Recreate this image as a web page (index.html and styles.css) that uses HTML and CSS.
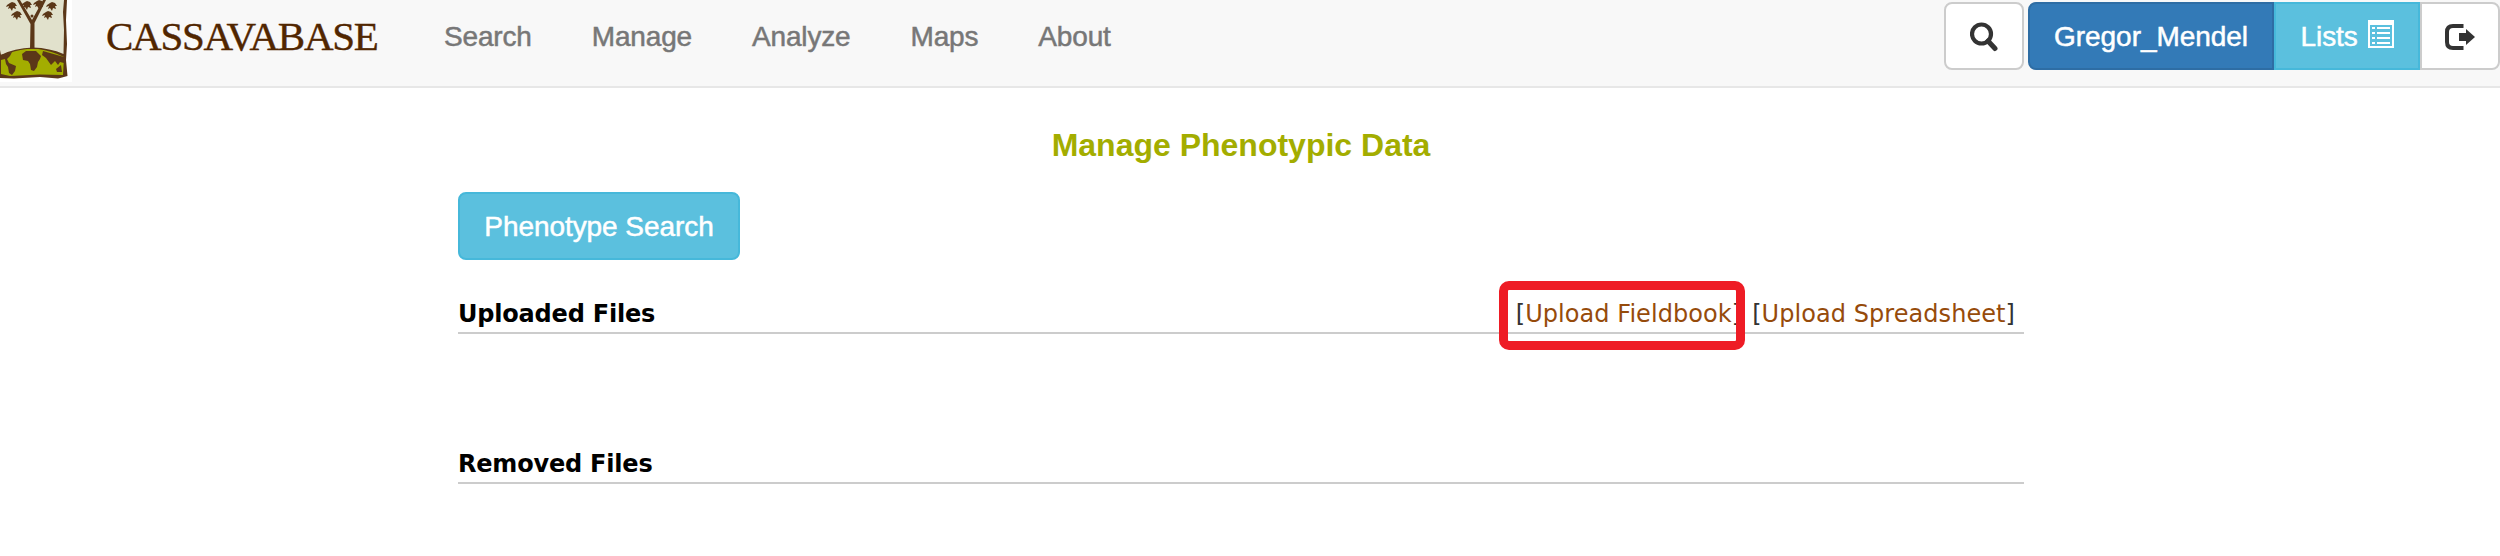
FILE: index.html
```html
<!DOCTYPE html>
<html lang="en">
<head>
<meta charset="utf-8">
<title>Cassavabase</title>
<link rel="stylesheet" href="styles.css">
</head>
<body>
<header class="navbar">
  <svg class="logo" viewBox="0 0 72 82">
    <rect width="72" height="82" fill="#fff"/>
    <path fill="#5b3718" d="M0 0H67L66 20L67 44L66 60L67.500 76L62 77.500L58 78.500L40 77L14 78.500L0 78Z"/>
    <path fill="#e1e1cc" d="M0 0H64L63 12L64 30L63.500 54Q50 48 33 47.500Q14 48 1 55L0 50Z"/>
    <path fill="#a3ad00" d="M1 57Q14 50 27 49L38 49Q52 51 64 57L63 75L40 74.500L10 76L1 74Z"/>
    <path fill="#5b3718" d="M30 49L30.500 24L17 0H20L32 20L43 0H46L34.500 23L34.500 49Z"/>
    <g fill="#5b3718">
      <path d="M22 54L26 51H36L41 56L40 59L38 62L37 67L34 71L31 70L30 64L28 61L23 60Z"/>
      <path d="M0 55L12 52L10 56L7 59L9 63L16 66L15 71L12 75L9 73L8 67L6 64L5 59L1 60Z"/>
      <path d="M43 51L64 57V63L60 62L58 65L55 61L51 65L46 58L42 55Z"/>
      <path d="M56 69L61 65L62 72L57 72Z"/>
      <path id="leaf" d="M12 14L15 12L17 11L20 12L22 15L20 15L21 18L18 17L17 20L15 17L13 18L14 15L11 16Z"/>
      <use href="#leaf" x="31"/><use href="#leaf" x="-5" y="-9"/><use href="#leaf" x="10" y="-10"/><use href="#leaf" x="22" y="-11"/><use href="#leaf" x="35" y="-9"/>
      <circle cx="32" cy="16" r="1.500"/>
    </g>
  </svg>
  <span class="brand">CASSAVABASE</span>
  <nav class="menu"><a>Search</a><a>Manage</a><a>Analyze</a><a>Maps</a><a>About</a></nav>
  <div class="actions">
    <button class="btn search"><svg width="28" height="32" viewBox="0 0 28 32"><circle cx="11.500" cy="13" r="9.500" fill="none" stroke="#333" stroke-width="4.200"/><path d="M18 20L25 27.500" stroke="#333" stroke-width="5" stroke-linecap="round"/></svg></button>
    <div class="group">
      <button class="btn user">Gregor_Mendel</button>
      <button class="btn lists">Lists <svg class="list-icon" width="26" height="28" viewBox="0 0 26 28"><path fill="#fff" fill-rule="evenodd" d="M0 0H26V28H0ZM2 5V26H24V5Z"/><path d="M4 8H7M4 13H7M4 18H7M4 23H7M9 8H22M9 13H22M9 18H22M9 23H22" stroke="#fff" stroke-width="2"/></svg></button>
      <button class="btn logout"><svg width="30" height="26" viewBox="0 0 30 26"><path d="M18.500 2H8Q2 2 2 8V18Q2 24 8 24H18.500" fill="none" stroke="#333" stroke-width="4"/><path fill="#333" d="M14 9H21V5L30 13L21 21V17H14Z"/></svg></button>
    </div>
  </div>
</header>
<main class="content">
  <h1 class="title">Manage Phenotypic Data</h1>
  <button class="btn phenotype">Phenotype Search</button>
  <section class="section uploaded">
    <h2 class="heading">Uploaded Files</h2>
    <div class="links"><span class="link marked">[<a>Upload Fieldbook</a>]</span><span class="link">[<a>Upload Spreadsheet</a>]</span></div>
  </section>
  <section class="section removed"><h2 class="heading">Removed Files</h2></section>
</main>
</body>
</html>
```
FILE: styles.css
```css
*, *::after { box-sizing: border-box; }
body { margin: 0; background: #fff; font-family: "Liberation Sans", Arial, sans-serif; font-size: 28px; color: #333; }
.navbar { display: flex; align-items: flex-start; height: 88px; background: #f8f8f8; border-bottom: 2px solid #e7e7e7; }
.logo { width: 72px; height: 82px; flex: none; }
.brand { width: 342px; padding-left: 34px; font: 41px/72px "Liberation Serif", serif; letter-spacing: -1.280px; color: #512600; white-space: nowrap; -webkit-text-stroke: 0.4px; }
.menu { display: flex; color: #777; line-height: 40px; padding-top: 17px; letter-spacing: -0.160px; -webkit-text-stroke: 0.5px; }
.menu a { padding: 0 30px; }
.actions { display: flex; gap: 4px; margin-left: auto; padding-top: 2px; }
.group { display: flex; }
.btn { display: flex; align-items: center; justify-content: center; height: 68px; padding: 2px 0 0; border: 2px solid #ccc; border-radius: 8px; background: #fff; font: 28px/40px "Liberation Sans", Arial, sans-serif; letter-spacing: -0.060px; color: #fff; white-space: pre; -webkit-text-stroke: 0.5px; }
.search { width: 80px; padding-top: 1px; }
.user { width: 246px; background: #337ab7; border-color: #2e6da4; border-radius: 8px 0 0 8px; }
.lists { width: 146px; background: #5bc0de; border-color: #46b8da; border-radius: 0; }
.list-icon { margin: -6px 0 0 2px; }
.logout { width: 80px; border-radius: 0 8px 8px 0; }
.content { width: 1566px; margin-left: 458px; }
.title { margin: 0; padding-top: 37px; font-size: 32px; line-height: 40px; text-align: center; color: #a3ad00; }
.phenotype { width: 282px; margin-top: 27px; background: #5bc0de; border-color: #46b8da; }
.section { display: flex; justify-content: space-between; align-items: flex-end; border-bottom: 2px solid #ccc; font-family: "DejaVu Sans", Verdana, sans-serif; font-size: 24px; line-height: 36px; }
.uploaded { height: 74px; }
.removed { height: 150px; }
.heading { margin: 0; font-size: 24px; color: #000; letter-spacing: -0.200px; }
.links { display: flex; gap: 11px; padding-right: 9px; letter-spacing: 0.060px; }
.link { position: relative; }
.link a { color: #964b0b; }
.marked::after { content: ""; position: absolute; left: -17px; top: -15px; width: 246px; height: 69px; border: 9px solid #ee1c25; border-radius: 10px; }
```
